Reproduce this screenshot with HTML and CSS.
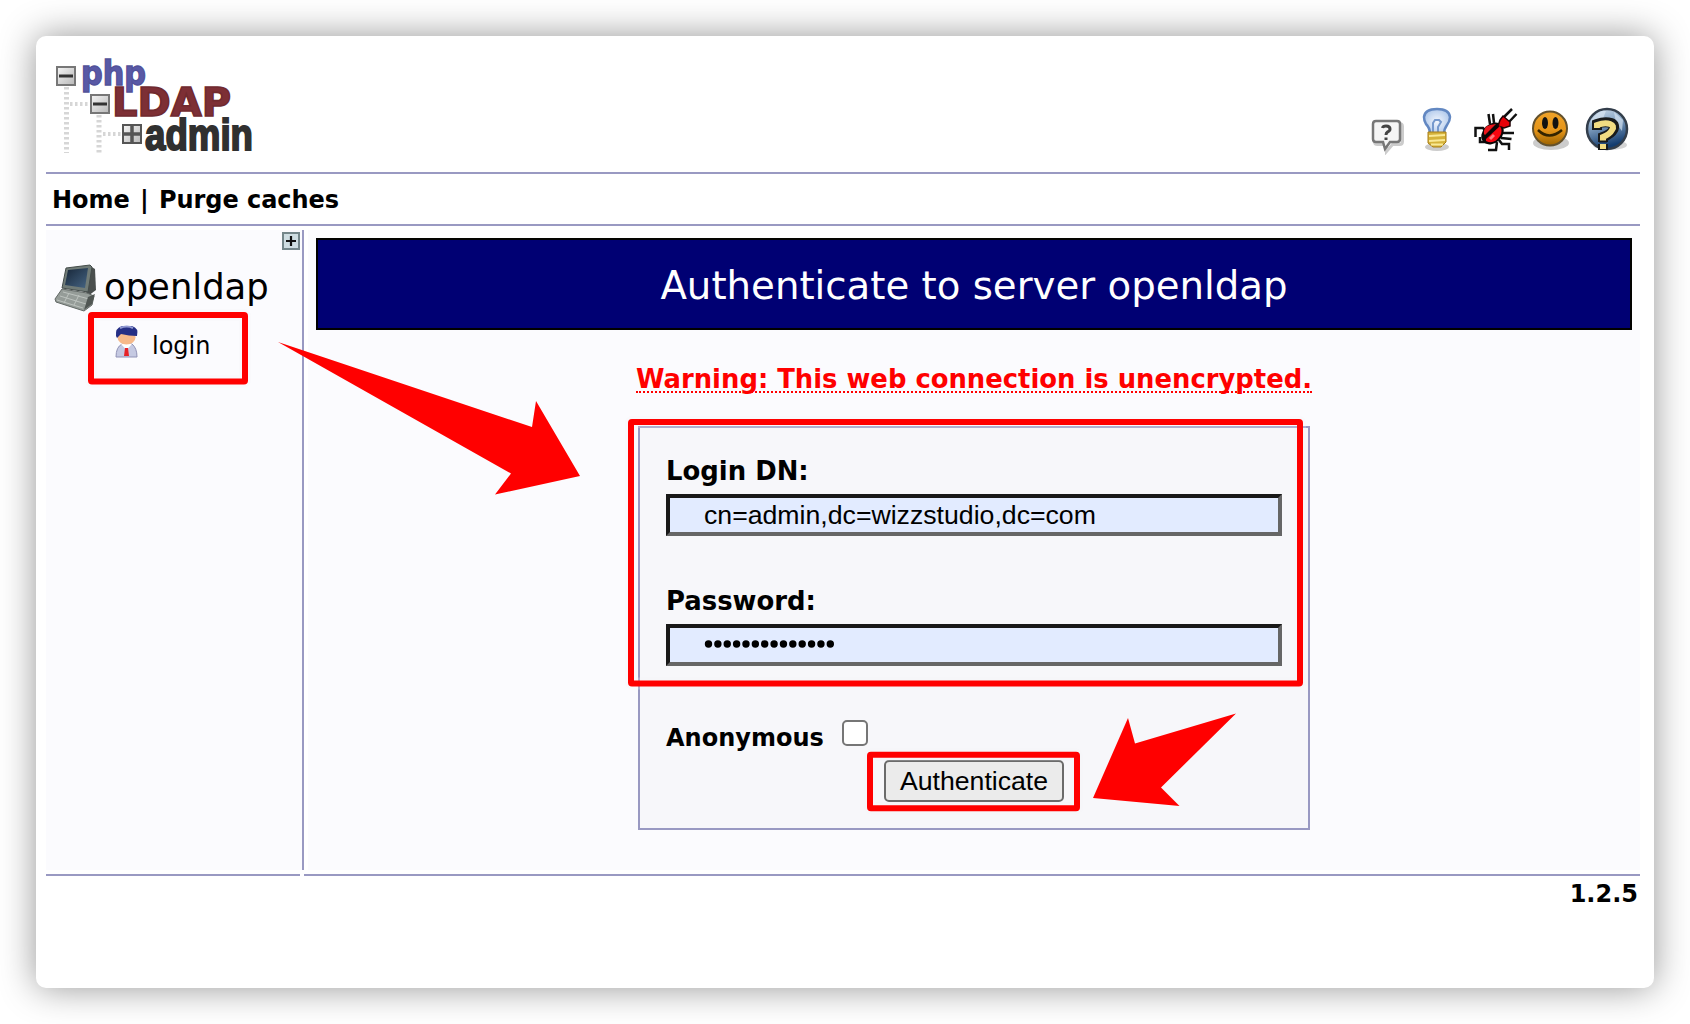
FILE: index.html
```html
<!DOCTYPE html>
<html lang="en">
<head>
<meta charset="utf-8">
<title>phpLDAPadmin</title>
<link rel="stylesheet" href="styles.css">
</head>
<body>
<div class="window">
  <header class="header">
    <svg class="logo" width="220" height="116" viewBox="0 0 220 116">
      <defs><linearGradient id="box" x1="0" y1="0" x2="1" y2="1"><stop offset="0" stop-color="#f5f5f5"/><stop offset="1" stop-color="#b8b8b8"/></linearGradient></defs>
      <g stroke="#d6d6d6" fill="none">
        <path d="M10.500 34V100M43 62V100" stroke-width="5" stroke-dasharray="2.500 2.500"/>
        <path d="M14 51H33M47 81H66" stroke-width="4" stroke-dasharray="2.500 2.500"/>
      </g>
      <g fill="url(#box)" stroke="#777" stroke-width="2">
        <rect x="1" y="14" width="18" height="18"/><rect x="35" y="42" width="18" height="18"/><rect x="67" y="72" width="18" height="18" stroke="#555"/>
      </g>
      <path d="M3 23H17M37 51H51" stroke="#333" stroke-width="3"/>
      <path d="M68 81H84M76 73V89" stroke="#555" stroke-width="3.500"/>
      <text class="logo-php" x="25" y="31.500" textLength="65" lengthAdjust="spacingAndGlyphs">php</text>
      <text class="logo-ldap" x="56" y="62.500" textLength="119" lengthAdjust="spacingAndGlyphs">LDAP</text>
      <text class="logo-admin" x="89" y="96.500" textLength="108" lengthAdjust="spacingAndGlyphs">admin</text>
    </svg>
    <div class="tools">
      <svg width="34" height="36" viewBox="0 0 34 36">
        <path d="M5 3H27Q30 3 30 6V21Q30 24 27 24H20L14 31V24H5Q2 24 2 21V6Q2 3 5 3Z" transform="translate(1.500 1.500)" fill="none" stroke="#ccc" stroke-width="3"/>
        <path d="M5 2H26Q29 2 29 5V20Q29 23 26 23H19L14 30L12 23H5Q2 23 2 20V5Q2 2 5 2Z" fill="#f5f5f5" stroke="#777" stroke-width="2.500"/>
        <path d="M11.500 9Q12 7 15 7Q19 7 19 10Q19 12 16.500 13Q15 14 15 16M15 18.500V21" fill="none" stroke="#444" stroke-width="3"/>
      </svg>
      <svg width="32" height="48" viewBox="0 0 32 48">
        <defs><radialGradient id="bulb"><stop offset="0" stop-color="#f2f6fd"/><stop offset="1" stop-color="#b5ccec"/></radialGradient></defs>
        <ellipse cx="16" cy="41" rx="12" ry="4" fill="#aaa" opacity=".6"/>
        <path d="M9 28Q9 22 5 18Q3 15 3 11Q4 3 16 3Q28 3 29 11Q29 15 26 19Q23 23 23 28Z" fill="url(#bulb)" stroke="#6388c2" stroke-width="2.500"/>
        <path d="M12 27V17L14 14H18L20 16L17 21V27" fill="none" stroke="#7699cd" stroke-width="2"/>
        <path d="M7 26H25V36L20 41H12L7 37Z" fill="#d5b33b" stroke="#a87d16"/>
        <path d="M8 30L24 29M8 35L24 34M10 38.500H22" stroke="#fae996" stroke-width="2"/>
      </svg>
      <svg width="46" height="46" viewBox="0 0 46 46">
        <path d="M2.500 31V22H10L13 25M15.500 8L17 18M20 8L21 17M30 12L39 3M35 17L43.500 8M29 27H41M28 32L38.500 33M26 34L29 38H36V44M24 36L23 44H15M13 36H7V31" fill="none" stroke="#111" stroke-width="2.500"/>
        <ellipse cx="19.500" cy="27.500" rx="12.500" ry="9.500" transform="rotate(-43 19.500 27.500)" fill="#0a0505"/>
        <path d="M27 14L30 10L37 16V20L31 22L25 20Z" fill="#e90009" stroke="#220204" stroke-width="1.500"/>
        <path d="M11 28Q10 21 17 19L23 18L12 29Z" fill="#e9151b"/>
        <path d="M13 33L27 20Q30 25 27 30Q21 39 13 35Z" fill="#f80610"/>
        <path d="M17 33L21 29" stroke="#ff777a" stroke-width="3"/>
      </svg>
      <svg width="42" height="46" viewBox="0 0 42 46">
        <defs><linearGradient id="smile" x2="0" y2="1"><stop stop-color="#efa32a"/><stop offset=".55" stop-color="#e59519"/><stop offset="1" stop-color="#9b6200"/></linearGradient></defs>
        <ellipse cx="21" cy="34" rx="18" ry="7" fill="#999" opacity=".5"/>
        <circle cx="20" cy="19.500" r="17" fill="url(#smile)" stroke="#63512d" stroke-width="2"/>
        <ellipse cx="15" cy="14" rx="3" ry="6" fill="#111"/><ellipse cx="25.500" cy="14" rx="3" ry="6" fill="#111"/>
        <path d="M8 21Q19 32 32 21" fill="none" stroke="#332400" stroke-width="2.500"/>
      </svg>
      <svg width="46" height="48" viewBox="0 0 46 48">
        <defs><linearGradient id="globe" x2=".3" y2="1"><stop stop-color="#d5e1ee"/><stop offset=".4" stop-color="#8eabc9"/><stop offset="1" stop-color="#143d70"/></linearGradient></defs>
        <ellipse cx="25" cy="39" rx="17" ry="5" fill="#aaa" opacity=".5"/>
        <circle cx="22" cy="23" r="20" fill="url(#globe)" stroke="#333e4b" stroke-width="2.500"/>
        <path d="M6 14Q15 3 21 5L17 15L8 21ZM29 6L38 14L37 25L31 17Z" fill="#dce8f4" opacity=".65"/>
        <path d="M12 24V18Q20 15 26 17Q31 19 28 24Q26 28 18 31V36M18 38V44" fill="none" stroke="#191b1c" stroke-width="10"/>
        <path d="M12 22V19Q20 16 25 18Q30 20 27 24Q25 28 18 31V36M18 38V43" fill="none" stroke="#f2dc82" stroke-width="6"/>
        <path d="M14 35.500H22" stroke="#191b1c" stroke-width="2"/>
      </svg>
    </div>
  </header>
  <nav class="nav"><span>Home <span class="bar">|</span> Purge caches</span></nav>
  <main class="main">
    <aside class="tree">
      <svg class="expand" width="18" height="18" viewBox="0 0 18 18"><rect x="1" y="1" width="16" height="16" fill="#ceddE2" stroke="#74868a" stroke-width="2"/><path d="M4 9H14M9 4V14" stroke="#111" stroke-width="2.200"/></svg>
      <div class="server">
        <svg width="44" height="50" viewBox="0 0 44 50">
          <defs><linearGradient id="screen" x2="1" y2="1"><stop stop-color="#172638"/><stop offset="1" stop-color="#456483"/></linearGradient></defs>
          <path d="M36 3L41 6L42 27L34 33L31 27Z" fill="#4a4f4e"/>
          <path d="M12 5L36 2L38 4L34 29L8 25Z" fill="#707b77" stroke="#444c4a"/>
          <path d="M14 7L34 5L31 25L11 22Z" fill="url(#screen)"/>
          <path d="M8 26L33 30L40 33L38 42L30 48L2 39L1 36Z" fill="#959c98" stroke="#626966"/>
          <path d="M9 29L35 36M6 33L32 41M3 37L29 45M15 30L10 40M25 32L20 42" stroke="#bdc3bf"/>
          <path d="M34 34L30 47L38 41L41 31Z" fill="#505653"/>
        </svg>
        <span>openldap</span>
      </div>
      <div class="login">
        <svg width="24" height="34" viewBox="0 0 24 34">
          <path d="M1 32Q1 22 7 19H17Q22 23 22 32Z" fill="#c5c9e2" stroke="#9092b6"/>
          <path d="M6 19L11.500 25L17 19" fill="#fff"/>
          <path d="M10 23H13L14 31H9Z" fill="#e62228"/>
          <ellipse cx="11.500" cy="12.500" rx="9" ry="7" fill="#f6b98a"/>
          <path d="M1 11Q0 3 7 1H17Q24 3 22 11Q14 11 6 9L2 13Z" fill="#252f85"/>
          <path d="M5 3Q12 0 18 3" fill="none" stroke="#929bd3" stroke-width="2"/>
        </svg>
        <span>login</span>
      </div>
    </aside>
    <section class="content">
      <h1 class="title"><span>Authenticate to server openldap</span></h1>
      <div class="warning"><span>Warning: This web connection is unencrypted.</span></div>
      <form class="form">
        <label class="label label-dn" for="dn"><span>Login DN:</span></label>
        <input class="field" id="dn" type="text" value="cn=admin,dc=wizzstudio,dc=com">
        <label class="label label-pw"><span>Password:</span></label>
        <div class="field dots"><svg width="132" height="8" viewBox="0 0 132 8"><path d="M4.500 4H130" stroke="#000" stroke-width="7.400" stroke-linecap="round" stroke-dasharray="0 9.370"/></svg></div>
        <div class="anon"><span>Anonymous</span><input class="check" type="checkbox" aria-label="Anonymous"></div>
        <button class="submit" type="button">Authenticate</button>
      </form>
    </section>
  </main>
  <footer class="footer"><div class="foot-left"></div><div class="foot-right"><span>1.2.5</span></div></footer>
</div>
<svg class="notes" width="1690" height="1024" viewBox="0 0 1690 1024">
  <g class="halo"><rect x="91" y="315" width="154" height="66.500" rx="1"/><rect x="631" y="422" width="669" height="261.500" rx="1"/><rect x="870" y="754.700" width="207" height="53.500" rx="1"/></g>
  <g class="marks"><rect x="91" y="315" width="154" height="66.500" rx="1"/><rect x="631" y="422" width="669" height="261.500" rx="1"/><rect x="870" y="754.700" width="207" height="53.500" rx="1"/></g>
  <path class="arrow" d="M278 342L532 427L536 401L580 476L495 494.500L511 473.500ZM1236 713.500L1135 743.500L1128 718L1093 798L1179.500 806L1161 787.500Z"/>
</svg>
</body>
</html>
```
FILE: styles.css
```css
* { box-sizing: border-box; }
body {
  margin: 0;
  width: 1690px;
  height: 1024px;
  overflow: hidden;
  padding: 36px;
  background: #fff;
  color: #000;
  font-family: "DejaVu Sans", sans-serif;
}
.window {
  height: 952px;
  width: 1618px;
  padding: 0 14px 0 10px;
  border-radius: 10px;
  background: #fff;
  box-shadow: 0 0 36px rgba(0, 0, 0, .42);
}
.header {
  display: flex;
  justify-content: space-between;
  height: 138px;
  border-bottom: 2px solid #9999c2;
}
.logo { margin: 17px 0 0 10px; }
.logo-php { font: bold 33px "DejaVu Sans", sans-serif; fill: #5959a6; stroke: #52529a; stroke-width: 1.4px; }
.logo-ldap { font: bold 39px "DejaVu Sans", sans-serif; fill: #7d2f35; stroke: #702a2f; stroke-width: 1.6px; }
.logo-admin { font: bold 44px "Liberation Sans", sans-serif; fill: #303030; stroke: #303030; stroke-width: 2px; }
.tools { position: relative; width: 270px; }
.tools svg { position: absolute; }
.tools svg:nth-child(1) { left: 1px; top: 83px; }
.tools svg:nth-child(2) { left: 51px; top: 70px; }
.tools svg:nth-child(3) { left: 103px; top: 70px; }
.tools svg:nth-child(4) { left: 160px; top: 73px; }
.tools svg:nth-child(5) { left: 215px; top: 70px; }
.nav {
  height: 52px;
  padding: 11px 0 0 6px;
  border-bottom: 2px solid #9999c2;
  font-weight: bold;
  font-size: 24px;
  line-height: 30px;
  letter-spacing: -.05px;
}
.bar { margin: 0 2px; }
.main { display: grid; grid-template-columns: 258px 1332px; gap: 4px; margin-top: 4px; height: 640px; }
.tree { display: flex; flex-direction: column; background: #fbfbfe; border-right: 2px solid #9999c2; }
.expand { align-self: flex-end; margin: 2px 2px 0 0; }
.server { display: flex; height: 50px; margin: 13px 0 0 8px; font-size: 35.4px; line-height: 48px; gap: 6px; }
.login { display: flex; margin: 12px 0 0 69px; gap: 13px; font-size: 24px; line-height: 42px; }
.content { background: #fbfbfe; padding: 8px 8px 0; }
.title {
  margin: 0;
  height: 92px;
  border: 2px solid #000;
  background: #000073;
  color: #fff;
  text-align: center;
  font-size: 38.7px;
  font-weight: normal;
  line-height: 92px;
}
.warning { height: 96px; padding-top: 33px; text-align: center; color: #f00; font-size: 25.85px; font-weight: bold; line-height: 32px; }
.warning span { display: inline-block; height: 30px; border-bottom: 2px dotted #f00; white-space: nowrap; }
.form {
  display: flex;
  flex-direction: column;
  width: 672px;
  height: 404px;
  margin: 0 auto;
  padding: 0 26px;
  border: 2px solid #9999c2;
  background: #f7f7fa;
}
.label { font-size: 25.9px; font-weight: bold; line-height: 30px; height: 66px; padding-top: 28px; }
.label-pw { height: 88px; padding-top: 50px; }
.field {
  width: 616px;
  height: 42px;
  padding: 0 0 0 34px;
  border: 4px solid;
  border-color: #181818 #666 #666 #181818;
  border-radius: 0;
  background: #e2ebff;
  font: 26.67px/34px "Liberation Sans", Arial, sans-serif;
}
.dots { display: flex; align-items: center; }
.dots svg { margin-top: -2px; }
.anon { display: flex; height: 94px; padding-top: 54px; font-size: 24px; font-weight: bold; line-height: 36px; }
.anon span { width: 176px; }
.check { appearance: none; width: 26px; height: 26px; margin: 0; border: 2px solid #767676; border-radius: 5px; background: #fff; }
.submit {
  width: 180px;
  height: 42px;
  margin-left: 218px;
  padding: 0;
  border: 2px solid #6b6b6b;
  border-radius: 5px;
  background: #ebebeb;
  font: 26.67px/38px "Liberation Sans", Arial, sans-serif;
}
.footer { display: grid; grid-template-columns: 254px 1336px; gap: 4px; margin-top: 4px; }
.footer div { border-top: 2px solid #9999c2; }
.foot-right { text-align: right; font-size: 24px; font-weight: bold; line-height: 30px; padding: 3px 2px 0; }
.notes { position: absolute; left: 0; top: 0; pointer-events: none; }
.marks { fill: none; stroke: #f00; stroke-width: 6px; stroke-linejoin: round; }
.halo { fill: none; stroke: rgba(245, 245, 247, .25); stroke-width: 12px; stroke-linejoin: round; }
.arrow { fill: #f00; }
```
